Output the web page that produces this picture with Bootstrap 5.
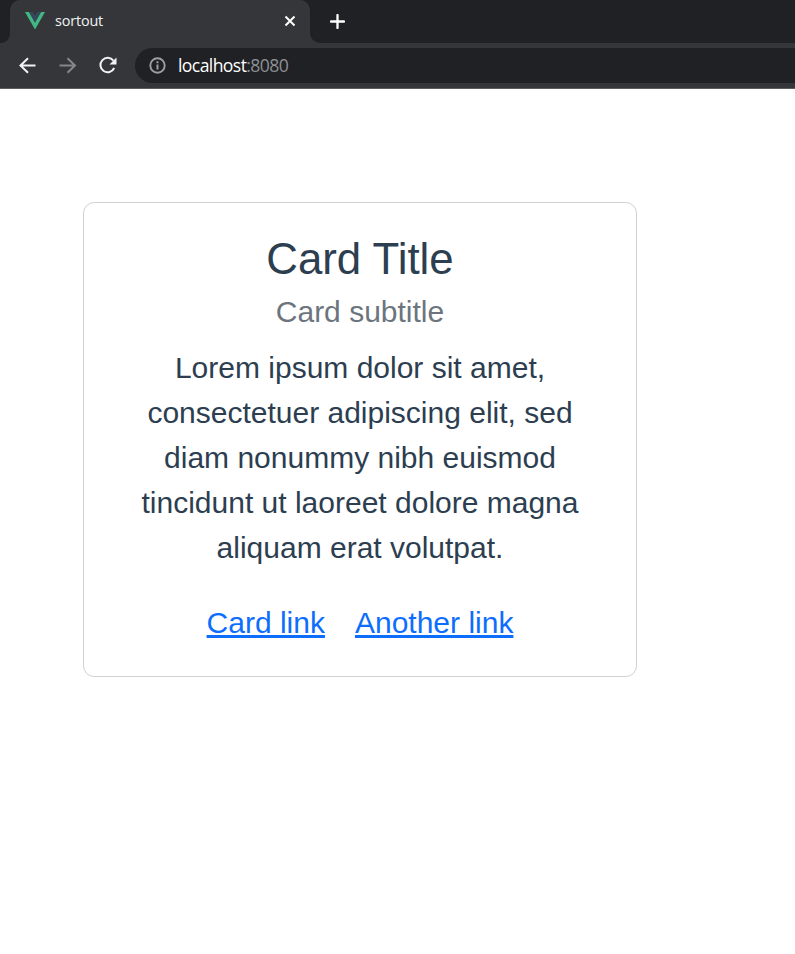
<!DOCTYPE html>
<html lang="en">
<head>
<meta charset="utf-8">
<title>sortout</title>
<link href="https://cdn.jsdelivr.net/npm/bootstrap@5.3.0/dist/css/bootstrap.min.css" rel="stylesheet">
<style>
body { background:#fff; overflow:hidden; }
.chrome { font-family:"Open Sans","Noto Sans",sans-serif; background:#35363a; height:89px; border-bottom:1px solid #5b5c5f; }
.tab-strip { height:43px; }
.strip-start { width:10px; background:#202124; border-bottom-right-radius:9px; }
.strip-end { background:#202124; border-bottom-left-radius:10px; padding:0 0 1px 20px; }
.tab-wrap { width:300px; background:#202124; }
.tab-active { background:#35363a; border-radius:10px 10px 0 0; padding:0 14px 2px 15px; }
.tab-name { font-size:14.4px; color:#f1f3f4; margin-left:10px; letter-spacing:-.15px; }
.toolbar { height:45px; }
.address { background:#202124; height:35px; border-radius:18px 0 0 18px; padding-left:14px; margin-left:17px; }
.url { font-size:17.6px; line-height:35px; margin-left:12px; color:#fff; letter-spacing:-.6px; }
.port { color:#8d9196; }
.demo { width:554px; height:475px; margin:113px 0 0 83px; border-radius:11.25px; border-color:#d0d1d2; color:#2c3e50; font:30px/1.5 "Liberation Sans",Arial,sans-serif; --bs-card-spacer-y:30px; --bs-card-spacer-x:30px; }
.demo .card-title { font-size:43.8px; line-height:52px; margin-bottom:16px; font-weight:400; }
.demo .card-subtitle { font-size:30px; line-height:36px; margin:-7px 0 15px; font-weight:400; color:#6c757d; }
.demo .card-text { margin-bottom:30px; }
.demo .card-link { color:#0d6efd; }
.demo .card-link + .card-link { margin-left:30px; }
</style>
<script src="https://cdn.jsdelivr.net/npm/bootstrap@5.3.0/dist/js/bootstrap.bundle.min.js"></script>
</head>
<body>
<header class="chrome">
  <div class="tab-strip d-flex">
    <div class="strip-start"></div>
    <div class="tab-wrap">
      <div class="tab-active d-flex align-items-center h-100">
        <svg width="20" height="18" viewBox="0 0 20 18"><path fill="#41b883" d="M0 0h4l6 10.4L16 0h4L10 17.5z"/><path fill="#35495e" d="M4 0h3.700L10 4l2.300-4H16l-6 10.4z"/></svg>
        <span class="tab-name">sortout</span>
        <svg class="ms-auto" width="12" height="12" viewBox="0 0 12 12"><path d="M1.5 1.5l9 9M10.5 1.5l-9 9" stroke="#fff" stroke-width="2"/></svg>
      </div>
    </div>
    <div class="strip-end flex-grow-1 d-flex align-items-center">
      <svg width="15" height="15" viewBox="0 0 15 15"><path d="M7.5 1v13M1 7.5h13" stroke="#fff" stroke-width="2.3" stroke-linecap="round"/></svg>
    </div>
  </div>
  <nav class="toolbar d-flex align-items-center">
    <svg width="118" height="24" viewBox="0 0 118 24" fill="none" stroke-width="2">
      <path d="M35.5 11.5H21M28 4.300L20.500 11.500l7.500 7.200" stroke="#f1f3f4"/>
      <path d="M59.5 11.5h15M67.500 4.300l7.500 7.200-7.500 7.200" stroke="#85868a"/>
      <path d="M113.4 6.700A7.200 7.200 0 1 0 114.200 14" stroke="#f1f3f4"/>
      <path d="M116.5 3.500v7h-7z" fill="#f1f3f4"/>
    </svg>
    <div class="address flex-grow-1 d-flex align-items-center">
      <svg width="17" height="17" viewBox="0 0 17 17"><circle cx="8.5" cy="8.5" r="7.2" fill="none" stroke="#9aa0a6" stroke-width="1.9"/><path d="M8.5 7.500v5M8.500 4.300v1.900" stroke="#9aa0a6" stroke-width="2"/></svg>
      <span class="url">localhost<span class="port">:8080</span></span>
    </div>
  </nav>
</header>
<main class="d-flex">
  <div class="card demo text-center">
    <div class="card-body">
      <h4 class="card-title">Card Title</h4>
      <h6 class="card-subtitle">Card subtitle</h6>
      <p class="card-text">Lorem ipsum dolor sit amet, consectetuer adipiscing elit, sed diam nonummy nibh euismod tincidunt ut laoreet dolore magna aliquam erat volutpat.</p>
      <div class="d-flex justify-content-center">
        <a href="#" class="card-link text-decoration-underline">Card link</a>
        <a href="#" class="card-link text-decoration-underline">Another link</a>
      </div>
    </div>
  </div>
</main>
</body>
</html>
